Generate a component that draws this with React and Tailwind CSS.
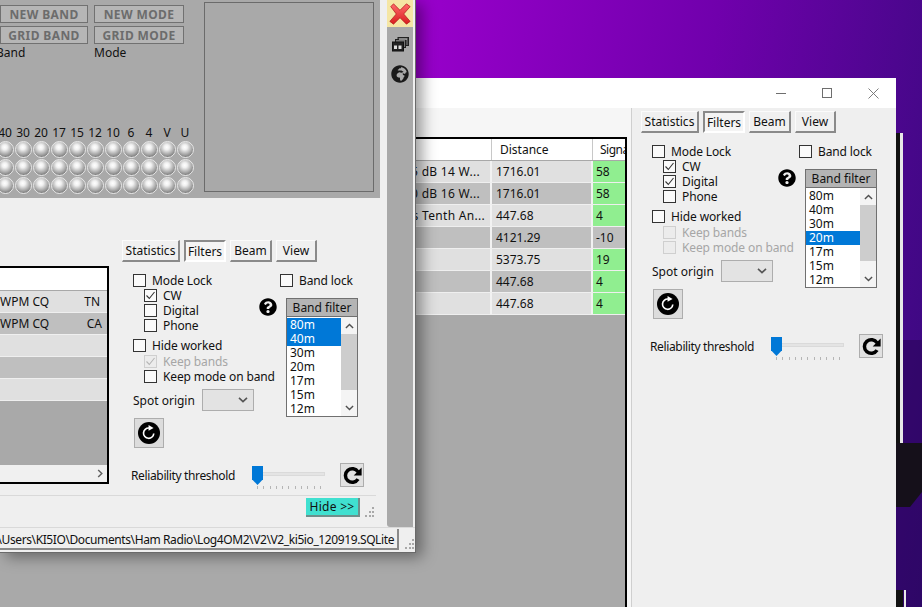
import React from "react";
import { FaQuestionCircle, FaGlobeAfrica } from "react-icons/fa";

const BANDS = ["80m", "40m", "30m", "20m", "17m", "15m", "12m"];
const LABELS = ["40", "30", "20", "17", "15", "12", "10", "6", "4", "V", "U"];

function Chevron({ up, className }) {
  return (
    <svg viewBox="0 0 10 6" className={className} fill="none" stroke="currentColor" strokeWidth="1.6">
      <path d={up ? "M1 5.2 L5 1.4 L9 5.2" : "M1 .8 L5 4.6 L9 .8"} />
    </svg>
  );
}

function Check({ label, checked, disabled, indent }) {
  return (
    <div className={indent ? "flex items-center h-[15px] ml-[11px]" : "flex items-center h-[15px]"}>
      <span className={disabled ? "w-[13px] h-[13px] shrink-0 border border-[#cfcfcf] bg-[#ececec] flex items-center justify-center text-[#b5b5b5]" : "w-[13px] h-[13px] shrink-0 border border-[#333333] bg-[#fafafa] flex items-center justify-center text-[#333333]"}>
        {checked && (
          <svg viewBox="0 0 11 11" className="w-[11px] h-[11px]" fill="none" stroke="currentColor" strokeWidth="1.1">
            <path d="M1.5 5.5 L4.3 8.5 L9.5 2" />
          </svg>
        )}
      </span>
      <span className={disabled ? "ml-[6px] text-[#a6a6a6] whitespace-nowrap tracking-[-0.12px]" : "ml-[6px] whitespace-nowrap tracking-[-0.12px]"}>{label}</span>
    </div>
  );
}

function Tab({ children, active, width }) {
  return (
    <div
      style={{ width }}
      className={active
        ? "h-[22px] flex items-center justify-center pt-[1px] bg-[#f4f4f4] border-2 border-t-[#8a8a8a] border-l-[#8a8a8a] border-r-white border-b-white"
        : "h-[22px] flex items-center justify-center bg-[#f0f0f0] border border-t-[#fbfbfb] border-l-[#fbfbfb] border-r-2 border-b-2 border-r-[#8a8a8a] border-b-[#8a8a8a]"}
    >
      {children}
    </div>
  );
}

function CircleRefresh() {
  return (
    <svg viewBox="0 0 24 24" className="w-[22px] h-[22px]">
      <circle cx="12" cy="12" r="12" fill="#000" />
      <path d="M17.2 12.5 A5.6 5.6 0 1 1 12 6.6" fill="none" stroke="#fff" strokeWidth="1.8" />
      <path d="M11.5 3.2 L17 6.6 L11.5 9.6 Z" fill="#fff" />
    </svg>
  );
}

function BoldRefresh() {
  return (
    <svg viewBox="0 0 24 24" className="w-[19px] h-[19px]">
      <path d="M19 7.5 A8.6 8.6 0 1 0 19 16.5" fill="none" stroke="#000" strokeWidth="4.4" />
      <path d="M23.5 2 V12 H13.5 Z" fill="#000" />
    </svg>
  );
}

function Panel({ selected, keepBandsChecked, keepModeDisabled, digital }) {
  return (
    <div className="w-[245px] shrink-0">
      <div className="flex gap-[4px]">
        <Tab width="58px">Statistics</Tab>
        <Tab width="42px" active>Filters</Tab>
        <Tab width="42px">Beam</Tab>
        <Tab width="41px">View</Tab>
      </div>
      <div className="flex mt-[11px]">
        <div className="w-[158px] pl-[11px] shrink-0">
          <Check label="Mode Lock" />
          <Check label="CW" checked indent />
          <Check label="Digital" checked={digital} indent />
          <Check label="Phone" indent />
          <div className="h-[5px]" />
          <Check label="Hide worked" />
          <div className="h-[1px]" />
          <Check label="Keep bands" checked={keepBandsChecked} disabled indent />
          <Check label="Keep mode on band" disabled={keepModeDisabled} indent />
          <div className="flex items-center mt-[5px] h-[22px]">
            <span className="w-[69px]">Spot origin</span>
            <span className="w-[52px] h-[22px] bg-[#e3e3e3] border border-[#adadad] flex items-center justify-end pr-[5px] text-[#555555]">
              <Chevron className="w-[10px] h-[6px]" />
            </span>
          </div>
          <div className="mt-[7px] ml-[1px] w-[30px] h-[30px] bg-[#dcdcdc] border border-[#adadad] flex items-center justify-center">
            <CircleRefresh />
          </div>
        </div>
        <div className="flex-1">
          <Check label="Band lock" />
          <div className="flex items-start mt-[10px]">
            <FaQuestionCircle className="w-[18px] h-[18px] -ml-[21px] mr-[9px] shrink-0 text-black" />
            <div className="w-[72px] shrink-0">
              <div className="h-[19px] bg-[#b4b4b4] border border-[#707070] flex items-center justify-center">Band filter</div>
              <div className="h-[100px] bg-white border border-t-0 border-[#707070] flex">
                <div className="w-[54px] pt-[1px] leading-[14px]">
                  {BANDS.map((b) => (
                    <div key={b} className={selected.includes(b) ? "h-[14px] pl-[3px] bg-[#0078d7] text-white" : "h-[14px] pl-[3px]"}>{b}</div>
                  ))}
                </div>
                <div className="flex-1 flex flex-col items-center bg-[#f4f4f4] text-[#505050]">
                  <div className="h-[17px] flex items-center"><Chevron up className="w-[9px] h-[6px]" /></div>
                  <div className="w-full h-[56px] bg-[#cdcdcd]" />
                  <div className="flex-1" />
                  <div className="h-[17px] flex items-center"><Chevron className="w-[9px] h-[6px]" /></div>
                </div>
              </div>
            </div>
          </div>
        </div>
      </div>
      <div className="flex items-center mt-[15px] h-[24px] ml-[9px]">
        <span className="w-[121px] whitespace-nowrap tracking-[-0.36px]">Reliability threshold</span>
        <div className="relative w-[73px] h-[24px]">
          <div className="mt-[9px] h-[4px] bg-[#e4e4e4] border border-[#dadada]" />
          <div className="absolute left-0 top-[3px] w-[11px] h-[19px] bg-[#0078d7] [clip-path:polygon(0_0,100%_0,100%_70%,50%_100%,0_70%)]" />
          <div className="absolute left-[5px] right-[4px] top-[23px] h-[3px] flex justify-between">
            {Array.from({ length: 11 }).map((_, i) => (
              <span key={i} className="w-[1px] h-[3px] bg-[#b5b5b5]" />
            ))}
          </div>
        </div>
        <div className="ml-[15px] w-[24px] h-[24px] bg-[#e1e1e1] border border-[#adadad] flex items-center justify-center">
          <BoldRefresh />
        </div>
      </div>
    </div>
  );
}

function Grip() {
  return (
    <div className="grid grid-cols-3 gap-[2px] w-[9px] h-[9px]">
      <span /><span /><span className="w-[2px] h-[2px] bg-[#a8a8a8]" />
      <span /><span className="w-[2px] h-[2px] bg-[#a8a8a8]" /><span className="w-[2px] h-[2px] bg-[#a8a8a8]" />
      <span className="w-[2px] h-[2px] bg-[#a8a8a8]" /><span className="w-[2px] h-[2px] bg-[#a8a8a8]" /><span className="w-[2px] h-[2px] bg-[#a8a8a8]" />
    </div>
  );
}

function ModeButton({ children }) {
  return (
    <div className="h-[18px] bg-[#b6b6b6] border border-[#717171] flex items-center justify-center font-bold text-[#6c6c6c] tracking-[0.4px] whitespace-nowrap">
      {children}
    </div>
  );
}

const ROWS = [
  ["-5 dB 14 W...", "1716.01", "58", 10],
  ["-0 dB 16 W...", "1716.01", "58", 10],
  ["s Tenth An...", "447.68", "4", 5],
  ["", "4121.29", "-10", 5],
  ["", "5373.75", "19", 5],
  ["", "447.68", "4", 5],
  ["", "447.68", "4", 5],
];

function BackWindow() {
  return (
    <div className="absolute left-0 top-[78px] w-[896px] h-[529px] flex flex-col bg-[#efefef]">
      <div className="h-[30px] bg-white flex justify-end items-center text-[#6e6e6e] shrink-0">
        <div className="w-[46px] flex justify-center"><span className="w-[10px] h-[1px] bg-[#6e6e6e]" /></div>
        <div className="w-[46px] flex justify-center"><span className="w-[10px] h-[10px] border border-[#6e6e6e]" /></div>
        <div className="w-[46px] flex justify-center">
          <svg viewBox="0 0 11 11" className="w-[11px] h-[11px]" fill="none" stroke="currentColor" strokeWidth="0.9"><path d="M.5 .5 L10.5 10.5 M10.5 .5 L.5 10.5" /></svg>
        </div>
      </div>
      <div className="flex flex-1 min-h-0">
        <div className="w-[632px] shrink-0 pt-[25px] pr-[4px] border-r border-[#cfcfcf] bg-[#f6f6f6]">
          <div className="h-full border-t-2 border-r-2 border-black mt-[4px] bg-[#a9a9a9]">
            <div className="h-[22px] bg-white flex border-b border-[#a8a8a8]">
              <div className="w-[492px] border-r border-[#c8c8c8]" />
              <div className="w-[101px] pl-[8px] border-r border-[#c8c8c8] flex items-center">Distance</div>
              <div className="flex-1 pl-[7px] flex items-center overflow-hidden whitespace-nowrap tracking-[-0.5px]">Signa</div>
            </div>
            {ROWS.map((r, i) => {
              const bg = i % 2 === 0 ? "bg-[#e0e0e0]" : "bg-[#bfbfbf]";
              const green = r[2] !== "-10";
              return (
                <div key={i} className="h-[22px] flex border-b border-[#efefef]">
                  <div style={{ paddingRight: r[3] }} className={`w-[492px] text-right flex items-center justify-end border-r-2 border-[#f2f2f2] tracking-[0.3px] ${bg}`}>{r[0]}</div>
                  <div className={`w-[101px] pl-[4px] flex items-center border-r-2 border-[#f2f2f2] ${bg}`}>{r[1]}</div>
                  <div className={green ? "flex-1 pl-[3px] flex items-center bg-[#90ee90]" : `flex-1 pl-[3px] flex items-center ${bg}`}>{r[2]}</div>
                </div>
              );
            })}
          </div>
        </div>
        <div className="pl-[9px] pt-[3px]">
          <Panel selected={["20m"]} digital keepModeDisabled />
        </div>
      </div>
    </div>
  );
}

function Sphere() {
  return <span className="w-[17px] h-[17px] rounded-full border border-[#e8e8e8] bg-[radial-gradient(circle_at_45%_35%,#ffffff_0%,#f0f0f0_20%,#a0a0a0_60%,#5e5e5e_92%)]" />;
}

function XIcon() {
  return (
    <svg viewBox="0 0 26 26" className="w-[24px] h-[24px]">
      <defs>
        <linearGradient id="xg" x1="0" y1="0" x2="0" y2="1">
          <stop offset="0" stopColor="#ff6a6a" />
          <stop offset="1" stopColor="#d81e1e" />
        </linearGradient>
      </defs>
      <path d="M3 5 L6 2 L13 9 L20 2 L24 5 L17 13 L24 21 L20 24 L13 17 L6 24 L2 21 L9 13 Z" fill="url(#xg)" stroke="#b01818" strokeWidth="0.8" />
    </svg>
  );
}

function WindowsIcon() {
  return (
    <svg viewBox="0 0 17 15" className="w-[17px] h-[15px]">
      <rect x="6" y="0.5" width="10.5" height="8" fill="#555" stroke="#222" strokeWidth="1" />
      <rect x="3.5" y="2.5" width="10" height="8" fill="#777" stroke="#222" strokeWidth="1" />
      <rect x="0.5" y="5" width="11" height="9" fill="#222" stroke="#111" strokeWidth="1" />
      <rect x="2" y="8.5" width="3" height="3.5" fill="#ddd" />
      <rect x="6.5" y="8.5" width="3" height="3.5" fill="#ddd" />
      <rect x="7" y="1.6" width="8" height="1" fill="#ccc" />
    </svg>
  );
}

function FrontWindow() {
  return (
    <div className="absolute left-0 top-0 w-[416px] h-[553px] flex flex-col bg-[#efefef] border-r border-b border-[#6a6a6a] shadow-[6px_4px_14px_rgba(0,0,0,0.4)]">
      <div className="flex h-[527px] shrink-0">
        <div className="w-[387px] shrink-0 flex flex-col overflow-hidden">
          <div className="w-[380px] h-[198px] shrink-0 bg-[#a9a9a9] flex">
            <div className="w-[204px] shrink-0 flex flex-col justify-between pt-[5px] pb-[4px]">
              <div className="grid grid-cols-[88px_90px] gap-x-[6px] gap-y-[3px]">
                <ModeButton>NEW BAND</ModeButton>
                <ModeButton>NEW MODE</ModeButton>
                <ModeButton>GRID BAND</ModeButton>
                <ModeButton>GRID MODE</ModeButton>
                <span className="-ml-[4px] -mt-[1px] leading-[14px]">Band</span>
                <span className="-mt-[1px] leading-[14px]">Mode</span>
              </div>
              <div className="-ml-[4px]">
                <div className="grid grid-cols-[repeat(11,18px)] h-[16px] leading-[14px] text-center items-end">
                  {LABELS.map((l) => <span key={l}>{l}</span>)}
                </div>
                <div className="grid grid-cols-[repeat(11,18px)] auto-rows-[18px] justify-items-center items-center">
                  {Array.from({ length: 33 }).map((_, i) => <Sphere key={i} />)}
                </div>
              </div>
            </div>
            <div className="mt-[2px] w-[170px] h-[190px] border border-[#6b6b6b]" />
          </div>
          <div className="flex h-[297px] shrink-0">
            <div className="w-[109px] shrink-0 pt-[68px]">
              <div className="h-[218px] border-y-2 border-r-2 border-black bg-[#a9a9a9] flex flex-col">
                <div className="h-[23px] bg-white border-b border-[#a8a8a8]" />
                <div className="h-[22px] bg-[#e0e0e0] border-b border-[#efefef] flex justify-between items-center pr-[7px] whitespace-nowrap"><span>WPM CQ</span><span>TN</span></div>
                <div className="h-[22px] bg-[#bfbfbf] border-b border-[#efefef] flex justify-between items-center pr-[5px] whitespace-nowrap"><span>WPM CQ</span><span>CA</span></div>
                <div className="h-[22px] bg-[#e0e0e0] border-b border-[#efefef]" />
                <div className="h-[22px] bg-[#bfbfbf] border-b border-[#efefef]" />
                <div className="h-[22px] bg-[#e0e0e0] border-b border-[#efefef]" />
                <div className="flex-1" />
                <div className="h-[17px] bg-[#f0f0f0] flex items-center justify-end pr-[4px] text-[#606060]">
                  <svg viewBox="0 0 6 10" className="w-[6px] h-[9px]" fill="none" stroke="currentColor" strokeWidth="1.6"><path d="M1 1 L5 5 L1 9" /></svg>
                </div>
              </div>
            </div>
            <div className="ml-[13px] pt-[42px]">
              <Panel selected={["80m", "40m"]} keepBandsChecked />
            </div>
          </div>
          <div className="w-[376px] flex-1 border-t border-[#d9d9d9] flex justify-end items-start pt-[2px]">
            <div className="w-[54px] h-[19px] bg-[#40e0d0] border-r-2 border-b-2 border-[#6e8f8b] flex items-center justify-center mr-[5px] tracking-[0.3px]">Hide &gt;&gt;</div>
            <div className="mt-[9px] mr-[2px]"><Grip /></div>
          </div>
        </div>
        <div className="w-[26px] h-[527px] bg-[#a9a9a9] flex flex-col items-center rounded-bl-[3px] shrink-0">
          <div className="w-full h-[27px] bg-[#f5e6a4] flex items-center justify-center"><XIcon /></div>
          <div className="mt-[10px]"><WindowsIcon /></div>
          <FaGlobeAfrica className="mt-[13px] w-[18px] h-[18px] text-[#1a1a1a]" />
        </div>
      </div>
      <div className="flex-1 flex items-start border-t border-[#d9d9d9]">
        <div className="w-[399px] h-[21px] mt-[1px] pt-[2px] border-r-2 border-b-2 border-[#8a8a8a] overflow-hidden flex justify-end items-center pr-[3px] whitespace-nowrap tracking-[-0.4px]">
          \Users\KI5IO\Documents\Ham Radio\Log4OM2\V2\V2_ki5io_120919.SQLite
        </div>
        <div className="ml-[6px] mt-[11px]"><Grip /></div>
      </div>
    </div>
  );
}

export default function App() {
  return (
    <div className="relative w-[922px] h-[607px] overflow-hidden font-['Noto_Sans',sans-serif] text-[12px] leading-[15px] text-[#111111] bg-[linear-gradient(100deg,#9a00cc_40%,#7000ac_70%,#360a7c_100%)]">
      <svg viewBox="0 0 26 607" className="absolute right-0 top-0 w-[26px] h-[607px]">
        <rect x="0" y="340" width="26" height="267" fill="#260452" opacity="0.5" />
        <rect x="0" y="133" width="4" height="310" fill="#111" />
        <rect x="4" y="133" width="3" height="310" fill="#e8e8e8" />
        <path d="M0 443 H26 V492 L14 507 H0 Z" fill="#15101a" />
        <rect x="0" y="590" width="7" height="17" fill="#111" />
        <rect x="8" y="590" width="2" height="17" fill="#e8e8e8" />
      </svg>
      <BackWindow />
      <FrontWindow />
    </div>
  );
}
